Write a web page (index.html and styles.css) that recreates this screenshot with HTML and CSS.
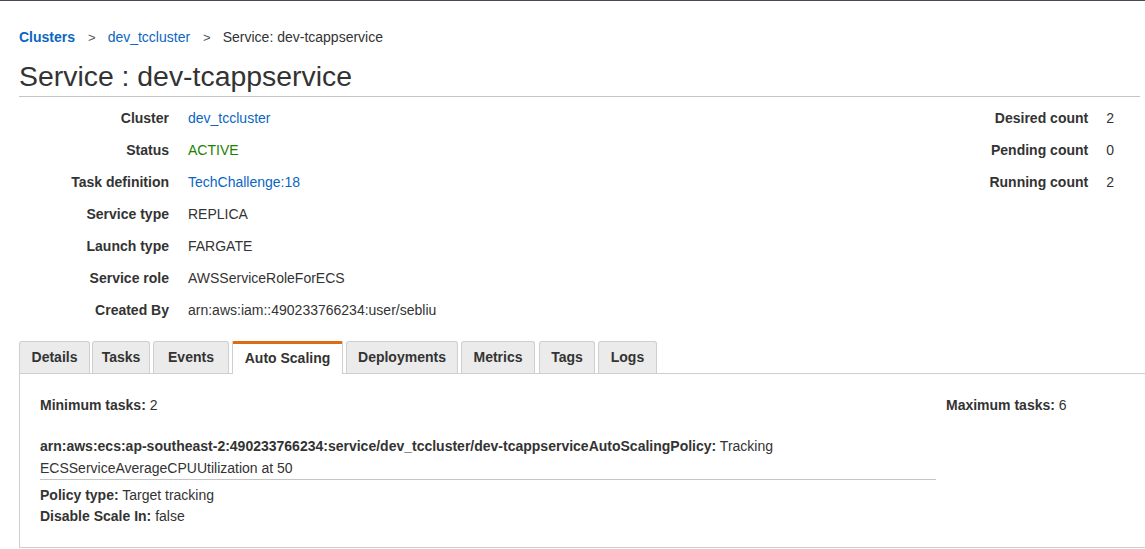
FILE: index.html
```html
<!DOCTYPE html>
<html>
<head>
<meta charset="utf-8">
<link rel="stylesheet" href="styles.css">
</head>
<body>
<div class="topbar"></div>
<main class="page">
  <nav class="crumbs">
    <a class="crumb crumb-strong" href="#">Clusters</a>
    <span class="sep">&gt;</span>
    <a class="crumb" href="#">dev_tccluster</a>
    <span class="sep">&gt;</span>
    <span class="crumb-current">Service: dev-tcappservice</span>
  </nav>
  <h1 class="title">Service : dev-tcappservice</h1>

  <section class="summary">
    <dl class="props">
      <dt>Cluster</dt><dd><a class="link" href="#">dev_tccluster</a></dd>
      <dt>Status</dt><dd class="ok">ACTIVE</dd>
      <dt>Task definition</dt><dd><a class="link" href="#">TechChallenge:18</a></dd>
      <dt>Service type</dt><dd>REPLICA</dd>
      <dt>Launch type</dt><dd>FARGATE</dd>
      <dt>Service role</dt><dd>AWSServiceRoleForECS</dd>
      <dt>Created By</dt><dd>arn:aws:iam::490233766234:user/sebliu</dd>
    </dl>
    <dl class="props props-right">
      <dt>Desired count</dt><dd>2</dd>
      <dt>Pending count</dt><dd>0</dd>
      <dt>Running count</dt><dd>2</dd>
    </dl>
  </section>

  <div class="tabs">
    <div class="tab t-details">Details</div>
    <div class="tab t-tasks">Tasks</div>
    <div class="tab t-events">Events</div>
    <div class="tab tab-active t-auto">Auto Scaling</div>
    <div class="tab t-deploy">Deployments</div>
    <div class="tab t-metrics">Metrics</div>
    <div class="tab t-tags">Tags</div>
    <div class="tab t-logs">Logs</div>
  </div>
  <section class="panel">
    <div class="limits">
      <div class="limit-min"><b>Minimum tasks:</b> 2</div>
      <div class="limit-max"><b>Maximum tasks:</b> 6</div>
    </div>
    <div class="policy">
      <div class="policy-name"><b>arn:aws:ecs:ap-southeast-2:490233766234:service/dev_tccluster/dev-tcappserviceAutoScalingPolicy:</b> Tracking ECSServiceAverageCPUUtilization at 50</div>
      <div class="policy-line"><b>Policy type:</b> Target tracking</div>
      <div class="policy-line"><b>Disable Scale In:</b> false</div>
    </div>
  </section>
</main>
</body>
</html>
```

FILE: styles.css
```css
* { box-sizing: border-box; }
html, body { margin: 0; padding: 0; background: #fff; }
body {
  font-family: "Liberation Sans", Arial, Helvetica, sans-serif;
  font-size: 14px;
  color: #333;
  overflow: hidden;
}
.topbar { height: 1px; background: #444b55; }
.page { padding-left: 19px; }

.crumbs {
  display: flex;
  align-items: center;
  height: 20px;
  margin-top: 26px;
  font-size: 14px;
}
.crumb { color: #0a66c2; text-decoration: none; }
.crumb-strong { font-weight: bold; }
.sep { color: #555; margin: 0 12px 0 13px; font-size: 13px; }
.crumb-current { color: #333; }

.title {
  margin: 10px 5px 0 0;
  font-weight: normal;
  font-size: 28.4px;
  line-height: 38px;
  height: 40px;
  color: #333;
  border-bottom: 1px solid #c4c4c4;
  padding-bottom: 1px;
}

.summary {
  display: flex;
  justify-content: space-between;
  padding: 5px 31px 0 0;
}
.props {
  display: grid;
  grid-template-columns: 150px auto;
  column-gap: 19px;
  margin: 0;
  align-content: start;
}
.props-right { grid-template-columns: auto auto; column-gap: 18px; }
.props dt {
  text-align: right;
  font-weight: bold;
  line-height: 32px;
  color: #333;
}
.props dd { margin: 0; line-height: 32px; color: #333; }
.link { color: #0a66c2; text-decoration: none; }
.ok { color: #1d8102 !important; }

.tabs {
  display: flex;
  gap: 3px;
  margin-top: 15px;
  height: 32px;
  align-items: flex-end;
}
.tab {
  height: 32px;
  background: #ebebeb;
  border: 1px solid #cfcfcf;
  border-bottom: none;
  border-radius: 3px 3px 0 0;
  font-weight: bold;
  color: #333;
  line-height: 31px;
  text-align: center;
  white-space: nowrap;
}
.t-details { width: 71px; }
.t-tasks { width: 58px; margin-left: -1px; }
.t-events { width: 76px; }
.t-auto { width: 111px; }
.t-deploy { width: 112px; }
.t-metrics { width: 74px; }
.t-tags { width: 56px; margin-left: 1px; }
.t-logs { width: 59px; }
.tab-active {
  background: #fff;
  border-top: 3px solid #dd6b10;
  line-height: 29px;
  position: relative;
  top: 1px;
  height: 33px;
  border-radius: 2px 2px 0 0;
}

.panel {
  border: 1px solid #cfcfcf;
  border-right: none;
  padding: 20px 20px 18px 20px;
  height: 175px;
}
.limits { display: flex; line-height: 22px; }
.limit-min { width: 906px; }
.policy { width: 896px; margin-top: 19px; }
.policy-name {
  line-height: 22px;
  border-bottom: 1px solid #c4c4c4;
  padding-bottom: 0;
  margin-bottom: 5px;
}
.policy-line { line-height: 21px; }
b { font-weight: bold; }
```
